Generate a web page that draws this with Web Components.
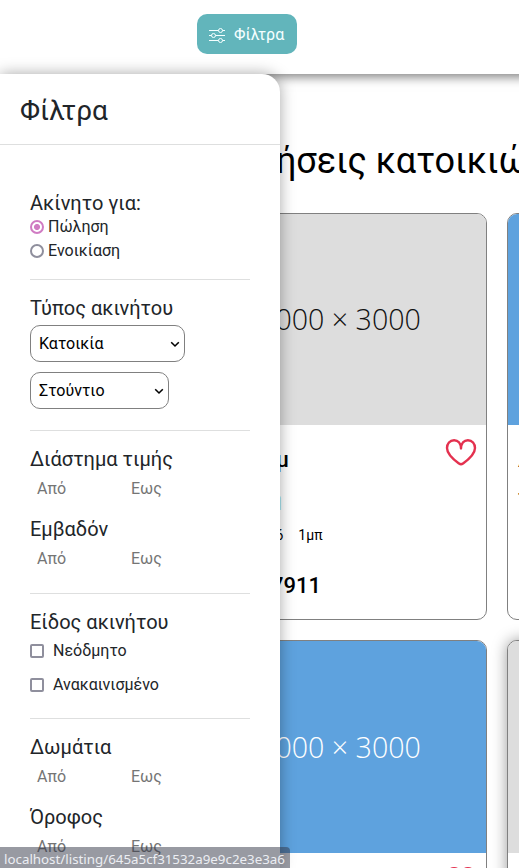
<!DOCTYPE html>
<html lang="el"><head><meta charset="utf-8"><title>Φίλτρα</title>
<style>
html,body{margin:0;height:868px;overflow:hidden;background:#fff}
body{font-family:Roboto,"Noto Sans",sans-serif;font-size:16px;line-height:24px;color:#000}
</style></head><body>
<listing-page></listing-page>
<script>
const define=(name,html)=>{
  const t=document.createElement('template');t.innerHTML=html;
  customElements.define(name,class extends HTMLElement{
    constructor(){super();this.attachShadow({mode:'open'}).append(t.content.cloneNode(true));}
  });
};
define('filter-button',`<style>
:host{display:flex;box-sizing:border-box;width:100px;height:40px;border-radius:10px;background:#62b5bb;color:#f5ffff;align-items:center;padding:2px 0 0 12px;gap:9px}
svg{width:16px;height:16px;margin-top:1px;flex:none}</style>
<svg viewBox="0 0 16 16" fill="none" stroke="currentColor"><path d="M0 2.5H9.5M13.5 2.5H16M0 7.5H2.5M6.5 7.5H16M0 12.5H9.5M13.5 12.5H16"/><circle cx="11.5" cy="2.5" r="2"/><circle cx="4.5" cy="7.5" r="2"/><circle cx="11.5" cy="12.5" r="2"/></svg><slot></slot>`);
define('heart-icon',`<style>:host{display:block;width:32px;height:28px}svg{display:block}</style>
<svg width="32" height="28" viewBox="0 0 32 28" fill="none" stroke="#e4314f" stroke-width="2.4" stroke-linejoin="round"><path d="M16 10.5C15.8 5.2 13 2.2 9.1 2.2C4.8 2.2 2 5.7 2 10C2 16.8 10.2 22.8 14 25.6Q16 27 18 25.6C21.8 22.8 30 16.8 30 10C30 5.7 27.2 2.2 22.9 2.2C19 2.2 16.2 5.2 16 10.5Z"/></svg>`);
define('listing-card',`<style>
:host{display:block;box-sizing:border-box;width:294px;height:407px;border:1px solid #808080;border-radius:10px;overflow:hidden;background:#fff}
.photo{box-sizing:border-box;height:var(--photo-h,211px);padding-bottom:var(--lift,2px);display:flex;align-items:center;justify-content:center;background:var(--photo,#ddd);color:var(--ink,#111);font:300 28.6px/40px "Open Sans",sans-serif;white-space:nowrap}
.body{display:flex;justify-content:space-between;padding:13px 9px 0 10px}
.info{white-space:nowrap}</style>
<div class="photo"><slot name="photo"></slot></div><div class="body"><div class="info"><slot></slot></div><heart-icon></heart-icon></div>`);
define('choice-row',`<style>
:host{display:flex;align-items:center;height:24px;gap:4px}
i{box-sizing:border-box;width:14px;height:14px;border:2px solid #8f8f9d;border-radius:50%;flex:none}
:host([checked]) i{border-color:#d07cc3;background:radial-gradient(circle,#d07cc3 0 2.7px,#fff 3.3px)}
:host([square]){height:34px;gap:9px}
:host([square]) i{border-radius:2px}</style><i></i><slot></slot>`);
define('select-box',`<style>
:host{display:flex;box-sizing:border-box;width:var(--w);height:37px;border:1px solid #808080;border-radius:10px;align-items:center;justify-content:space-between;padding:0 4px 0 8px;color:#000;background:#fff}
svg{width:10px;height:10px;flex:none}</style><slot></slot><svg viewBox="0 0 10 10" fill="none" stroke="#000" stroke-width="1.6"><path d="M1.2 3.3L5 7L8.8 3.3"/></svg>`);
define('range-row',`<style>:host{display:grid;grid-template-columns:94px 94px;height:34px;line-height:36px;padding-left:7px;color:#757575}</style><span>Από</span><span>Εως</span>`);
define('filter-group',`<style>
:host{display:block;box-sizing:border-box;height:var(--h);padding-top:16px;border-top:1px solid #dedfdf}
:host([first]){border-color:transparent}</style><slot></slot>`);
define('filter-drawer',`<style>
:host{display:block;box-sizing:border-box;background:#fff;color:#212529;border-radius:0 18px 0 0;box-shadow:0 0 15px rgba(0,0,0,.35)}
header{box-sizing:border-box;height:71px;border-bottom:1px solid #dedfdf;padding:20px 20px 0;font-size:28px;line-height:34px}
main{padding:29px 30px 0}
h3{font-size:20px;line-height:24px;font-weight:400;margin:0}
.gap{margin-top:12px}
select-box{margin-top:5px}
select-box+select-box{margin-top:10px}
</style><header>Φίλτρα</header><main>
<filter-group first style="--h:105px"><h3>Ακίνητο για:</h3><choice-row checked>Πώληση</choice-row><choice-row>Ενοικίαση</choice-row></filter-group>
<filter-group style="--h:151px"><h3>Τύπος ακινήτου</h3><select-box style="--w:155px">Κατοικία</select-box><select-box style="--w:139px">Στούντιο</select-box></filter-group>
<filter-group style="--h:163px"><h3>Διάστημα τιμής</h3><range-row></range-row><h3 class="gap">Εμβαδόν</h3><range-row></range-row></filter-group>
<filter-group style="--h:125px"><h3>Είδος ακινήτου</h3><choice-row square>Νεόδμητο</choice-row><choice-row square>Ανακαινισμένο</choice-row></filter-group>
<filter-group style="--h:150px"><h3>Δωμάτια</h3><range-row></range-row><h3 class="gap">Όροφος</h3><range-row></range-row></filter-group>
</main>`);
define('listing-page',`<style>
:host{display:block;position:relative;width:519px;height:868px;overflow:hidden}
.bar{box-sizing:border-box;width:560px;height:74px;padding:14px 0 0 197px;background:#fff;box-shadow:0 3px 10px rgba(0,0,0,.5)}
h1{margin:66px 0 31px;padding-left:200.6px;font-size:36px;line-height:42px;font-weight:400;white-space:nowrap}
.grid{display:grid;grid-template-columns:294px 294px;gap:20px;padding-left:193px}
.blue{--photo:#5ea2de;--ink:#fff}
.low{--photo-h:212px;--lift:1px}
.hover{box-shadow:0 0 15px rgba(0,0,0,.4)}
.t{font-size:22px;font-weight:500;line-height:44px;width:85px;text-align:right}
.a{font-size:20px;line-height:34px;margin-bottom:1px;width:78px;text-align:right;color:#a5e1e5}
.r{font-size:14px;line-height:36px;display:flex;gap:15px;justify-content:flex-end;width:118.5px}
.p{font-size:22px;font-weight:500;line-height:36px;margin-top:15px;width:117px;text-align:right}
.o{color:#111;font-size:22px;line-height:40px}
filter-drawer{position:absolute;left:0;top:74px;width:280px;height:794px}
.status{position:absolute;left:0;bottom:0;box-sizing:border-box;width:290px;height:21px;border-radius:0 4px 0 0;background:rgba(49,54,70,.5);color:#eceef3;font:13.333px/24px "Noto Sans",sans-serif;padding-left:4px;white-space:nowrap}
</style>
<div class="bar"><filter-button>Φίλτρα</filter-button></div>
<h1>Πωλήσεις κατοικιών</h1>
<div class="grid">
<listing-card><span slot="photo">3000 × 3000</span><div class="t">τμ</div><div class="a">η</div><div class="r"><span>6</span><span>1μπ</span></div><div class="p">7911</div></listing-card>
<listing-card class="blue"><span slot="photo">3000 × 3000</span><div class="t" style="text-align:left">Δ</div><div class="o">Τ</div></listing-card>
<listing-card class="blue low"><span slot="photo">3000 × 3000</span></listing-card>
<listing-card class="hover low"><span slot="photo">3000 × 3000</span></listing-card>
</div>
<filter-drawer></filter-drawer>
<div class="status">localhost/listing/645a5cf31532a9e9c2e3e3a6</div>`);
</script></body></html>
